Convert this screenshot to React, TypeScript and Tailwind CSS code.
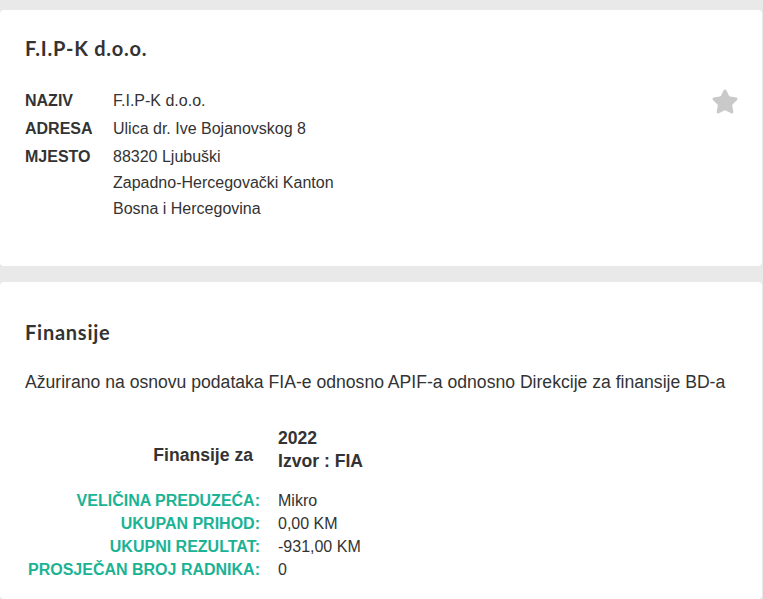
import { Star } from 'lucide-react';

const body = "font-[Liberation_Sans,Arial,sans-serif]";
const heading = "font-[Lato,sans-serif] font-bold text-[20px] tracking-[0.75px] text-[#333] leading-[24px]";

const company = {
  naziv: 'F.I.P-K d.o.o.',
  adresa: 'Ulica dr. Ive Bojanovskog 8',
  mjesto: ['88320 Ljubuški', 'Zapadno-Hercegovački Kanton', 'Bosna i Hercegovina'],
};

const finances = [
  { label: 'VELIČINA PREDUZEĆA:', value: 'Mikro' },
  { label: 'UKUPAN PRIHOD:', value: '0,00 KM' },
  { label: 'UKUPNI REZULTAT:', value: '-931,00 KM' },
  { label: 'PROSJEČAN BROJ RADNIKA:', value: '0' },
];

export default function App() {
  return (
    <div className={`h-[599px] overflow-hidden bg-[#e9e9e9] pt-[10px] pr-px ${body} text-[#333]`}>
      <div className="bg-white rounded-[4px] h-[256px] px-[25px] pt-[26px]">
        <h1 className={heading}>F.I.P-K d.o.o.</h1>
        <div className="flex justify-between mt-[27px]">
          <div className="grid grid-cols-[88px_1fr] text-[16px] leading-[26px]">
            <div className="font-bold py-px">NAZIV</div>
            <div className="py-px">{company.naziv}</div>
            <div className="font-bold py-px">ADRESA</div>
            <div className="py-px">{company.adresa}</div>
            <div className="font-bold py-px">MJESTO</div>
            <div className="py-px">
              {company.mjesto.map((line) => (
                <div key={line}>{line}</div>
              ))}
            </div>
          </div>
          <Star className="w-[28px] h-[28px] mt-px mr-[-2px] text-[#c9c9c9] fill-[#c9c9c9]" strokeWidth={1.5} />
        </div>
      </div>

      <div className="bg-white rounded-[4px] mt-[16px] px-[25px] pt-[38px] pb-[18px]">
        <h2 className={heading}>Finansije</h2>
        <p className="text-[17.6px] leading-[24px] mt-[26px]">
          Ažurirano na osnovu podataka FIA-e odnosno APIF-a odnosno Direkcije za finansije BD-a
        </p>

        <div className="grid grid-cols-[235px_1fr] mt-[33px]">
          <div className="text-right font-bold text-[17.6px] leading-[23px] pr-[7px] pt-[17px]">Finansije za</div>
          <div className="font-bold text-[17.6px] leading-[23px] pl-[18px]">
            <div>2022</div>
            <div>Izvor : FIA</div>
          </div>
        </div>

        <div className="grid grid-cols-[235px_1fr] mt-[16px] text-[16px] leading-[23px]">
          {finances.map((row) => (
            <div key={row.label} className="contents">
              <div className="text-right font-bold text-[#1ab394]">{row.label}</div>
              <div className="pl-[18px]">{row.value}</div>
            </div>
          ))}
        </div>
      </div>
    </div>
  );
}
